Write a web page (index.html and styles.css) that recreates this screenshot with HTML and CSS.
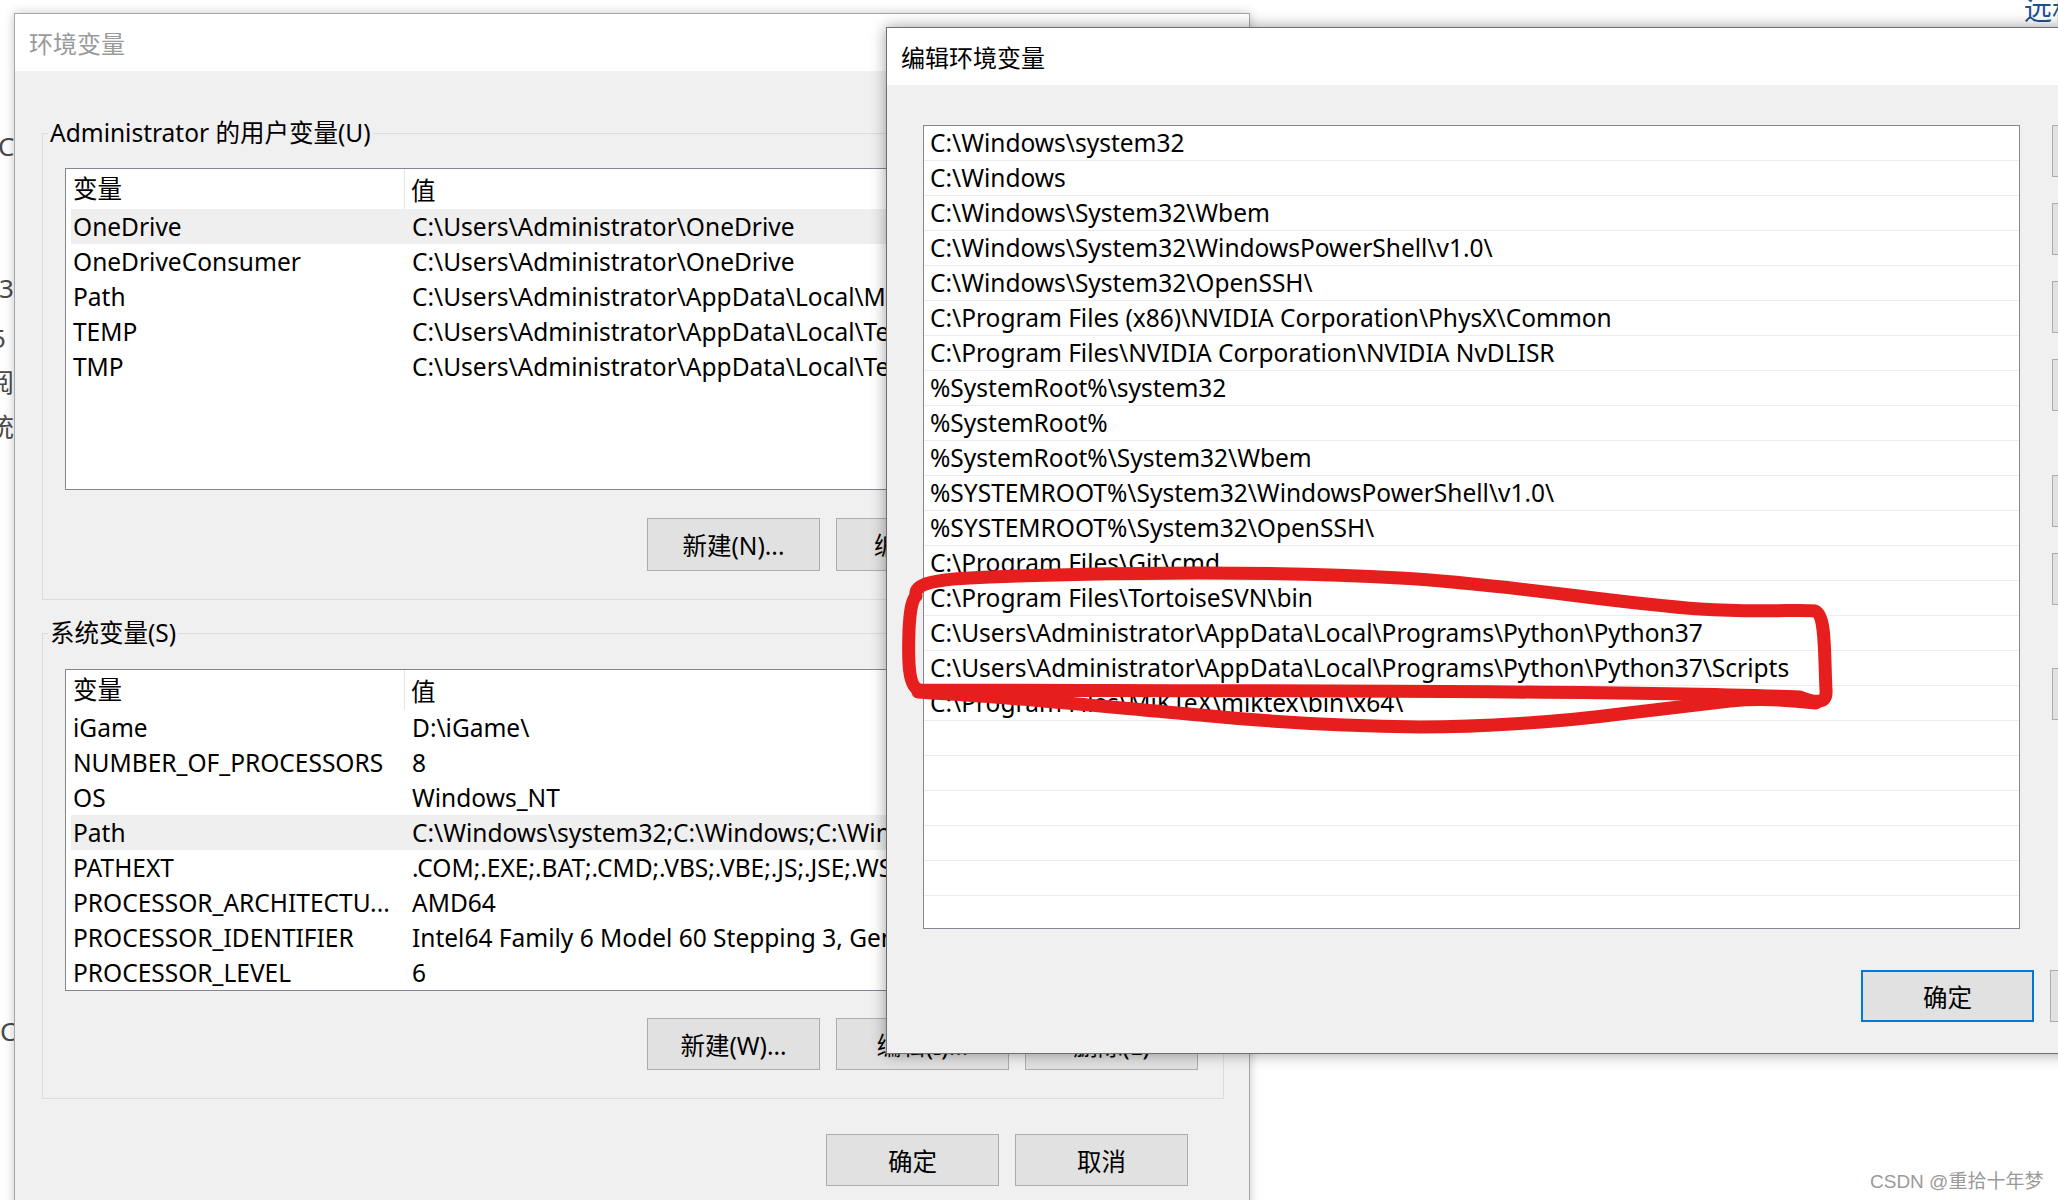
FILE: index.html
```html
<!DOCTYPE html>
<html lang="zh-CN">
<head>
<meta charset="utf-8">
<title>环境变量</title>
<link rel="stylesheet" href="styles.css">
</head>
<body>
<div class="desk">
  <div class="bgpage">
    <span class="frag f1">CF</span>
    <span class="frag f2">3</span>
    <span class="frag f3">5</span>
    <span class="frag f4">阅</span>
    <span class="frag f5">统</span>
    <span class="frag f6">C</span>
  </div>
  <div class="toplink">远程设置</div>

  <div class="win win-left">
    <div class="titlebar inactive">环境变量</div>
    <div class="wbody wbody-left">
      <div class="group">
        <div class="glabel">Administrator 的用户变量(U)</div>
        <div class="listview">
          <div class="lv-head"><span class="c1">变量</span><span class="c2">值</span></div>
          <div class="lv-row sel"><span class="c1">OneDrive</span><span class="c2">C:\Users\Administrator\OneDrive</span></div>
          <div class="lv-row"><span class="c1">OneDriveConsumer</span><span class="c2">C:\Users\Administrator\OneDrive</span></div>
          <div class="lv-row"><span class="c1">Path</span><span class="c2">C:\Users\Administrator\AppData\Local\Microsoft\WindowsApps;</span></div>
          <div class="lv-row"><span class="c1">TEMP</span><span class="c2">C:\Users\Administrator\AppData\Local\Temp</span></div>
          <div class="lv-row"><span class="c1">TMP</span><span class="c2">C:\Users\Administrator\AppData\Local\Temp</span></div>
        </div>
        <div class="btnrow btnrow-g1">
          <button class="btn">新建(N)...</button>
          <button class="btn">编辑(E)...</button>
          <button class="btn">删除(D)</button>
        </div>
      </div>

      <div class="group group2">
        <div class="glabel">系统变量(S)</div>
        <div class="listview lv2">
          <div class="lv-head"><span class="c1">变量</span><span class="c2">值</span></div>
          <div class="lv-row"><span class="c1">iGame</span><span class="c2">D:\iGame\</span></div>
          <div class="lv-row"><span class="c1">NUMBER_OF_PROCESSORS</span><span class="c2">8</span></div>
          <div class="lv-row"><span class="c1">OS</span><span class="c2">Windows_NT</span></div>
          <div class="lv-row sel"><span class="c1">Path</span><span class="c2">C:\Windows\system32;C:\Windows;C:\Windows\System32\Wbem;</span></div>
          <div class="lv-row"><span class="c1">PATHEXT</span><span class="c2">.COM;.EXE;.BAT;.CMD;.VBS;.VBE;.JS;.JSE;.WSF;.WSH;.MSC</span></div>
          <div class="lv-row"><span class="c1">PROCESSOR_ARCHITECTU...</span><span class="c2">AMD64</span></div>
          <div class="lv-row"><span class="c1">PROCESSOR_IDENTIFIER</span><span class="c2">Intel64 Family 6 Model 60 Stepping 3, GenuineIntel</span></div>
          <div class="lv-row"><span class="c1">PROCESSOR_LEVEL</span><span class="c2">6</span></div>
        </div>
        <div class="btnrow btnrow-g2">
          <button class="btn">新建(W)...</button>
          <button class="btn">编辑(I)...</button>
          <button class="btn">删除(L)</button>
        </div>
      </div>

      <div class="btnrow btnrow-main">
        <button class="btn">确定</button>
        <button class="btn">取消</button>
      </div>
    </div>
    <span class="grip"></span>
  </div>

  <div class="win win-right">
    <div class="titlebar">编辑环境变量</div>
    <div class="wbody wbody-right">
      <div class="editmain">
        <div class="pathlist">
          <div class="prow">C:\Windows\system32</div>
          <div class="prow">C:\Windows</div>
          <div class="prow">C:\Windows\System32\Wbem</div>
          <div class="prow">C:\Windows\System32\WindowsPowerShell\v1.0\</div>
          <div class="prow">C:\Windows\System32\OpenSSH\</div>
          <div class="prow">C:\Program Files (x86)\NVIDIA Corporation\PhysX\Common</div>
          <div class="prow">C:\Program Files\NVIDIA Corporation\NVIDIA NvDLISR</div>
          <div class="prow">%SystemRoot%\system32</div>
          <div class="prow">%SystemRoot%</div>
          <div class="prow">%SystemRoot%\System32\Wbem</div>
          <div class="prow">%SYSTEMROOT%\System32\WindowsPowerShell\v1.0\</div>
          <div class="prow">%SYSTEMROOT%\System32\OpenSSH\</div>
          <div class="prow">C:\Program Files\Git\cmd</div>
          <div class="prow">C:\Program Files\TortoiseSVN\bin</div>
          <div class="prow">C:\Users\Administrator\AppData\Local\Programs\Python\Python37</div>
          <div class="prow">C:\Users\Administrator\AppData\Local\Programs\Python\Python37\Scripts</div>
          <div class="prow">C:\Program Files\MiKTeX\miktex\bin\x64\</div>
          <div class="prow"></div>
          <div class="prow"></div>
          <div class="prow"></div>
          <div class="prow"></div>
          <div class="prow"></div>
          <div class="prow"></div>
        </div>
        <div class="sidebtns">
          <button class="btn sb">新建(N)</button>
          <button class="btn sb">编辑(E)</button>
          <button class="btn sb">浏览(B)...</button>
          <button class="btn sb">删除(D)</button>
          <button class="btn sb sb-gap">上移(U)</button>
          <button class="btn sb">下移(O)</button>
          <button class="btn sb sb-gap2">编辑文本(T)...</button>
        </div>
      </div>
      <div class="okrow">
        <button class="btn btn-default">确定</button>
        <button class="btn">取消</button>
      </div>
    </div>
  </div>

  <svg class="redmark" width="2058" height="1200" viewBox="0 0 2058 1200" xmlns="http://www.w3.org/2000/svg">
    <path d="M 916 596 C 914 584 930 579 990 577 C 1120 572 1280 571 1400 578 C 1520 585 1610 603 1700 609 C 1760 613 1800 609 1815 611 C 1826 615 1824 650 1826 690 C 1827 703 1818 704 1800 697 C 1600 690 1200 691 920 690 C 908 688 908 660 909 630 C 910 610 912 600 916 596 Z" fill="none" stroke="#e61e1e" stroke-width="13" stroke-linejoin="round" stroke-linecap="round"/>
    <path d="M 1816 703 C 1790 700 1760 698 1730 701 C 1690 706 1660 709 1620 714 C 1560 722 1480 727 1420 727 C 1340 726 1260 721 1200 715 C 1120 708 1040 700 980 696 C 950 694 930 693 918 692" fill="none" stroke="#e61e1e" stroke-width="13" stroke-linejoin="round" stroke-linecap="round"/>
  </svg>

  <div class="watermark">CSDN @重拾十年梦</div>
</div>
</body>
</html>
```

FILE: styles.css
```css
html, body {
  margin: 0;
  padding: 0;
}

body {
  width: 2058px;
  height: 1200px;
  overflow: hidden;
  background: #ffffff;
  font-family: "Noto Sans", "Noto Sans CJK SC", sans-serif;
  color: #000;
}

.desk {
  position: relative;
  width: 2058px;
  height: 1200px;
  overflow: hidden;
  background: #ffffff;
}

/* background page fragments peeking at the left edge */
.bgpage {
  position: absolute;
  left: 0;
  top: 0;
  width: 40px;
  height: 1200px;
  color: #4a4a4a;
  font-size: 26px;
  font-family: "Noto Sans", "Noto Sans CJK SC", sans-serif;
}
.frag {
  position: absolute;
  line-height: 1;
  white-space: nowrap;
}
.f1 { left: -2px; top: 133px; }
.f2 { left: -1px; top: 275px; }
.f3 { left: -9px; top: 325px; }
.f4 { left: -12px; top: 369px; }
.f5 { left: -12px; top: 414px; }
.f6 { left: 0px; top: 1018px; }

.toplink {
  position: absolute;
  left: 2024px;
  top: -7px;
  font-size: 28px;
  line-height: 1.2;
  color: #1c5394;
  white-space: nowrap;
}

/* windows */
.win {
  position: absolute;
  box-sizing: border-box;
  display: flex;
  flex-direction: column;
  background: #f0f0f0;
}

.win-left {
  left: 14px;
  top: 13px;
  width: 1236px;
  height: 1200px;
  border: 1px solid #a6a6a6;
  box-shadow: 0 0 10px rgba(0, 0, 0, 0.22);
}

.win-right {
  left: 886px;
  top: 27px;
  width: 1300px;
  height: 1027px;
  border: 1px solid #6f6f6f;
  box-shadow: 0 0 14px rgba(0, 0, 0, 0.38);
}

.titlebar {
  flex: none;
  height: 57px;
  background: #ffffff;
  display: flex;
  align-items: center;
  padding-left: 14px;
  font-size: 24px;
  color: #000;
  font-family: "Noto Sans CJK SC", sans-serif;
}
.titlebar.inactive {
  color: #9a9a9a;
}

.wbody {
  flex: 1;
  display: flex;
  flex-direction: column;
  font-size: 24.5px;
}

.wbody-left {
  padding: 62px 25px 0 27px;
}

.group {
  border: 1px solid #dcdcdc;
  display: flex;
  flex-direction: column;
  padding: 0 25px 28px 22px;
}
.group2 {
  margin-top: 33px;
}

.glabel {
  align-self: flex-start;
  margin-top: -16px;
  margin-left: -17px;
  height: 30px;
  line-height: 30px;
  padding: 0 2px;
  background: #f0f0f0;
  white-space: nowrap;
}

.listview {
  box-sizing: border-box;
  height: 322px;
  margin-top: 20px;
  border: 1px solid #828790;
  background: #ffffff;
  padding-left: 5px;
  overflow: hidden;
}
.lv2 {
  margin-top: 21px;
}

.lv-head,
.lv-row {
  display: flex;
  white-space: nowrap;
}
.lv-head {
  height: 40px;
  align-items: center;
}
.lv-row {
  height: 35px;
  align-items: center;
}
.lv-row.sel {
  background: #efefef;
}
.c1 {
  flex: none;
  box-sizing: border-box;
  width: 334px;
  padding-left: 2px;
  overflow: hidden;
}
.c2 {
  flex: 1;
  padding-left: 7px;
  overflow: hidden;
}
.lv-head .c1 {
  height: 40px;
  line-height: 40px;
  border-right: 1px solid #e5e5e5;
}
.lv-head .c2 {
  padding-left: 6px;
}

.btnrow {
  display: flex;
  justify-content: flex-end;
  gap: 16px;
}
.btnrow-g1 {
  margin-top: 28px;
}
.btnrow-g1 .btn {
  height: 53px;
}
.btnrow-g2 {
  margin-top: 27px;
}
.btnrow-main {
  margin-top: 35px;
  margin-right: 36px;
}

.btn {
  box-sizing: border-box;
  width: 173px;
  height: 52px;
  margin: 0;
  padding: 0;
  background: #e1e1e1;
  border: 1px solid #adadad;
  border-radius: 0;
  font-family: "Noto Sans", "Noto Sans CJK SC", sans-serif;
  font-size: 24.5px;
  color: #000;
  white-space: nowrap;
  flex: none;
}
.btn-default {
  border: 2px solid #0078d7;
}

.grip {
  position: absolute;
  right: 4px;
  bottom: 2px;
  width: 3px;
  height: 3px;
  background: #b5b5b5;
}

/* edit dialog */
.wbody-right {
  padding: 40px 0 0 36px;
}
.editmain {
  display: flex;
  gap: 32px;
  align-items: flex-start;
}
.pathlist {
  box-sizing: border-box;
  width: 1097px;
  height: 804px;
  flex: none;
  background: #ffffff;
  border: 1px solid #828790;
  overflow: hidden;
}
.prow {
  box-sizing: border-box;
  height: 35px;
  line-height: 34px;
  border-bottom: 1px solid #ececec;
  padding-left: 6px;
  white-space: nowrap;
}
.sidebtns {
  display: flex;
  flex-direction: column;
  gap: 26px;
}
.sb-gap {
  margin-top: 38px;
}
.sb-gap2 {
  margin-top: 37px;
}
.okrow {
  display: flex;
  gap: 16px;
  margin-top: 41px;
  padding-left: 938px;
}

.redmark {
  position: absolute;
  left: 0;
  top: 0;
  pointer-events: none;
}

.watermark {
  position: absolute;
  left: 1870px;
  top: 1166px;
  font-family: "Liberation Sans", "Noto Sans CJK SC", sans-serif;
  font-size: 19px;
  color: #9a9a9a;
  white-space: nowrap;
}
```
